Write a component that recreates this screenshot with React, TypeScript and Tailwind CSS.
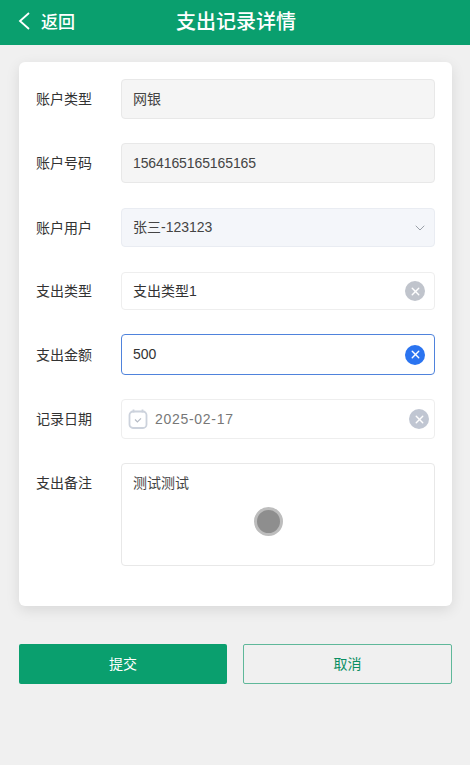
import React from 'react';
import { ChevronDown, X } from 'lucide-react';

const font = "font-['Liberation_Sans','Noto_Sans_CJK_SC',sans-serif]";

function ClearIcon({ color }: { color: string }) {
  return (
    <span className={`flex h-[20px] w-[20px] items-center justify-center rounded-full ${color}`}>
      <X className="h-[13px] w-[13px] text-white" strokeWidth={2.5} />
    </span>
  );
}

function Row({ label, className, labelClass, children }: { label: string; className?: string; labelClass?: string; children: React.ReactNode }) {
  return (
    <div className={`flex ${className ?? ''}`}>
      <label className={`w-[86px] shrink-0 pl-[1px] text-[14px] leading-[20px] text-[#333] ${labelClass ?? ''}`}>{label}</label>
      <div className="flex-1">{children}</div>
    </div>
  );
}

export default function App() {
  return (
    <div className={`h-[765px] w-[470px] overflow-hidden bg-[#f0f0f0] ${font}`}>
      {/* Header */}
      <header className="relative flex h-[45px] items-center bg-[#0a9f6e] text-white">
        <div className="flex items-center pl-[18px]">
          <svg className="-mt-[4px] h-[18px] w-[12px]" viewBox="0 0 12 18" fill="none" stroke="currentColor" strokeWidth="1.8">
            <path d="M11 1L2 9l9 8" />
          </svg>
          <span className="ml-[11px] text-[17px] font-medium">返回</span>
        </div>
        <h1 className="absolute left-[176px] top-[7px] text-[20px] font-medium leading-[30px]">支出记录详情</h1>
      </header>

      <main className="pl-[19px] pr-[18px] pt-[17px]">
        {/* Form */}
        <div className="h-[544px] rounded-[6px] bg-white pl-[16px] pr-[17px] pt-[17px] shadow-[0_4px_14px_rgba(0,0,0,0.1)]">
          <Row label="账户类型" className="mb-[24px] items-center">
            <div className="flex h-[40px] items-center rounded-[4px] border border-[#e8e8e8] bg-[#f5f5f5] px-[11px] text-[14px] text-[#444]">网银</div>
          </Row>
          <Row label="账户号码" className="mb-[25px] items-center">
            <div className="flex h-[40px] items-center rounded-[4px] border border-[#e8e8e8] bg-[#f5f5f5] px-[11px] text-[14px] tracking-[-0.1px] text-[#444]">1564165165165165</div>
          </Row>
          <Row label="账户用户" className="mb-[25px] items-center">
            <div className="flex h-[39px] items-center justify-between rounded-[4px] border border-[#e9ecf2] bg-[#f4f6fa] pl-[11px] pr-[6px] text-[14px] text-[#444]">
              <span>张三-123123</span>
              <ChevronDown className="h-[16px] w-[16px] text-[#9aa0a8]" strokeWidth={1.5} />
            </div>
          </Row>
          <Row label="支出类型" className="mb-[24px] items-center">
            <div className="flex h-[38px] items-center justify-between rounded-[4px] border border-[#eeeeee] bg-white pl-[11px] pr-[9px] text-[14px] text-[#333]">
              <span>支出类型1</span>
              <ClearIcon color="bg-[#c0c4cc]" />
            </div>
          </Row>
          <Row label="支出金额" className="mb-[24px] items-center">
            <div className="flex h-[41px] items-center justify-between rounded-[4px] border border-[#4f83dc] bg-white pl-[11px] pr-[9px] text-[14px] text-[#333]">
              <span>500</span>
              <ClearIcon color="bg-[#2b74f0]" />
            </div>
          </Row>
          <Row label="记录日期" className="mb-[24px] items-center">
            <div className="flex h-[40px] items-center justify-between rounded-[4px] border border-[#eeeeee] bg-white pl-[6px] pr-[5px] text-[14px] text-[#777]">
              <span className="flex items-center">
                <svg className="h-[20px] w-[20px]" viewBox="0 0 20 20" fill="none" stroke="#ccd2dc" strokeWidth="1.8">
                  <rect x="1.5" y="2.5" width="17" height="16.5" rx="3.5" />
                  <path d="M5.5 0.5v3M14.5 0.5v3" />
                  <path d="M7 10.5l2.4 2.4 3.6-3.6" stroke="#b5bbc5" strokeWidth="1.2" />
                </svg>
                <span className="ml-[7px] tracking-[0.7px]">2025-02-17</span>
              </span>
              <ClearIcon color="bg-[#c0c6d2]" />
            </div>
          </Row>
          <Row label="支出备注" className="relative items-start" labelClass="pt-[10px]">
            <div className="h-[103px] rounded-[4px] border border-[#e8e8e8] bg-white px-[11px] py-[9px] text-[14px] leading-[20px] text-[#444]">测试测试</div>
            {/* touch indicator */}
            <span className="absolute left-[219px] top-[44px] h-[29px] w-[29px] rounded-full border-[3px] border-[#bdbdbd] bg-[#8e8e8e]" />
          </Row>
        </div>

        {/* Buttons */}
        <div className="mt-[38px] flex gap-[16px]">
          <button type="button" className="h-[40px] w-[208px] rounded-[2px] bg-[#0a9f6e] text-[14px] text-white">提交</button>
          <button type="button" className="h-[40px] w-[209px] rounded-[2px] border border-[#5fb89a] text-[14px] text-[#0a8f63]">取消</button>
        </div>
      </main>
    </div>
  );
}
